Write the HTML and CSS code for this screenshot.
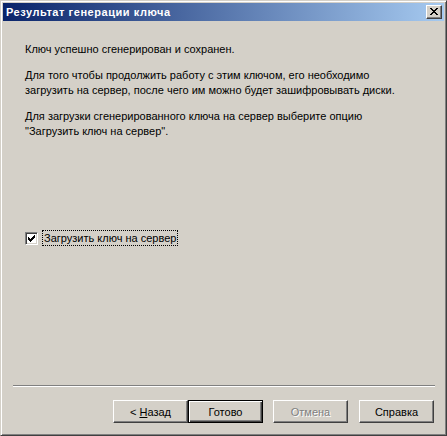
FILE: index.html
```
<!DOCTYPE html>
<html lang="ru">
<head>
<meta charset="utf-8">
<title>Результат генерации ключа</title>
<link rel="stylesheet" href="styles.css">
</head>
<body>
<div class="window">
  <div class="titlebar">
    <span class="title">Результат генерации ключа</span>
    <button class="close" aria-label="Закрыть">
      <svg width="8" height="7" viewBox="0 0 8 7" shape-rendering="crispEdges">
        <g fill="#000">
          <rect x="0" y="0" width="2" height="1"/><rect x="6" y="0" width="2" height="1"/>
          <rect x="1" y="1" width="2" height="1"/><rect x="5" y="1" width="2" height="1"/>
          <rect x="2" y="2" width="4" height="1"/>
          <rect x="3" y="3" width="2" height="1"/>
          <rect x="2" y="4" width="4" height="1"/>
          <rect x="1" y="5" width="2" height="1"/><rect x="5" y="5" width="2" height="1"/>
          <rect x="0" y="6" width="2" height="1"/><rect x="6" y="6" width="2" height="1"/>
        </g>
      </svg>
    </button>
  </div>
  <div class="content">
    <p class="para">Ключ успешно сгенерирован и сохранен.</p>
    <p class="para">Для того чтобы продолжить работу с этим ключом, его необходимо<br>загрузить на сервер, после чего им можно будет зашифровывать диски.</p>
    <p class="para">Для загрузки сгенерированного ключа на сервер выберите опцию<br>"Загрузить ключ на сервер".</p>
    <div class="check-row">
      <span class="checkbox">
        <svg width="7" height="7" viewBox="0 0 7 7" shape-rendering="crispEdges">
          <g fill="#000">
            <rect x="6" y="0" width="1" height="1"/>
            <rect x="5" y="1" width="2" height="1"/>
            <rect x="0" y="2" width="1" height="1"/><rect x="4" y="2" width="3" height="1"/>
            <rect x="0" y="3" width="2" height="1"/><rect x="3" y="3" width="3" height="1"/>
            <rect x="0" y="4" width="5" height="1"/>
            <rect x="1" y="5" width="3" height="1"/>
            <rect x="2" y="6" width="1" height="1"/>
          </g>
        </svg>
      </span>
      <span class="check-label">Загрузить ключ на сервер</span>
    </div>
  </div>
  <div class="separator"></div>
  <div class="buttons">
    <button class="btn">&lt; <u>Н</u>азад</button>
    <button class="btn btn-default">Готово</button>
    <button class="btn btn-disabled gap-a">Отмена</button>
    <button class="btn gap-b">Справка</button>
  </div>
</div>
</body>
</html>
```
FILE: styles.css
```
* { box-sizing: border-box; }
html, body { margin: 0; padding: 0; background: #d4d0c8; }
body {
  font-family: "Liberation Sans", Arial, sans-serif;
  font-size: 11px;
  color: #000;
}
.window {
  width: 447px;
  height: 436px;
  background: #d4d0c8;
  border: 1px solid;
  border-color: #d4d0c8 #404040 #404040 #d4d0c8;
  box-shadow: inset 1px 1px 0 #ffffff, inset -1px -1px 0 #808080;
  padding: 2px;
  display: flex;
  flex-direction: column;
}
.titlebar {
  height: 18px;
  flex: 0 0 18px;
  background: linear-gradient(to right, #0a246a, #a6caf0);
  display: flex;
  align-items: center;
  padding: 0 2px 0 3px;
}
.title {
  color: #fff;
  font-weight: bold;
  font-size: 11px;
  flex: 1;
  white-space: nowrap;
  letter-spacing: 0.55px;
}
.close {
  width: 16px;
  height: 14px;
  padding: 0;
  margin: 0;
  background: #d4d0c8;
  border: 1px solid;
  border-color: #ffffff #404040 #404040 #ffffff;
  box-shadow: inset -1px -1px 0 #808080;
  display: flex;
  align-items: center;
  justify-content: center;
}
.close svg { display: block; margin: 0 1px 1px 0; }
.content {
  flex: 1;
  padding: 21px 0 0 22px;
}
.para {
  margin: 0 0 11px 0;
  line-height: 15px;
  white-space: nowrap;
}
.check-row {
  margin-top: 91px;
  display: flex;
  align-items: center;
  height: 16px;
}
.checkbox {
  width: 13px;
  height: 13px;
  background: #fff;
  border: 1px solid;
  border-color: #808080 #ffffff #ffffff #808080;
  box-shadow: inset 1px 1px 0 #404040, inset -1px -1px 0 #d4d0c8;
  display: flex;
  align-items: center;
  justify-content: center;
}
.checkbox svg { display: block; }
.check-label {
  margin-left: 4px;
  border: 1px dotted #000;
  padding: 0 1px;
  line-height: 14px;
  white-space: nowrap;
}
.separator {
  height: 2px;
  flex: 0 0 2px;
  margin: 0 9px 0 10px;
  border-top: 1px solid #808080;
  border-bottom: 1px solid #ffffff;
}
.buttons {
  display: flex;
  justify-content: flex-end;
  padding: 13px 10px 10px 0;
}
.btn {
  width: 75px;
  height: 23px;
  margin: 0;
  padding: 0;
  font-family: "Liberation Sans", Arial, sans-serif;
  font-size: 11px;
  color: #000;
  background: #d4d0c8;
  border: 1px solid;
  border-color: #ffffff #404040 #404040 #ffffff;
  box-shadow: inset -1px -1px 0 #808080;
}
.btn-default {
  border: 1px solid #000;
  box-shadow: inset 1px 1px 0 #ffffff, inset -1px -1px 0 #404040, inset -2px -2px 0 #808080;
}
.btn-disabled {
  color: #808080;
  text-shadow: 1px 1px 0 #ffffff;
}
.gap-a { margin-left: 10px; }
.gap-b { margin-left: 11px; }
```
